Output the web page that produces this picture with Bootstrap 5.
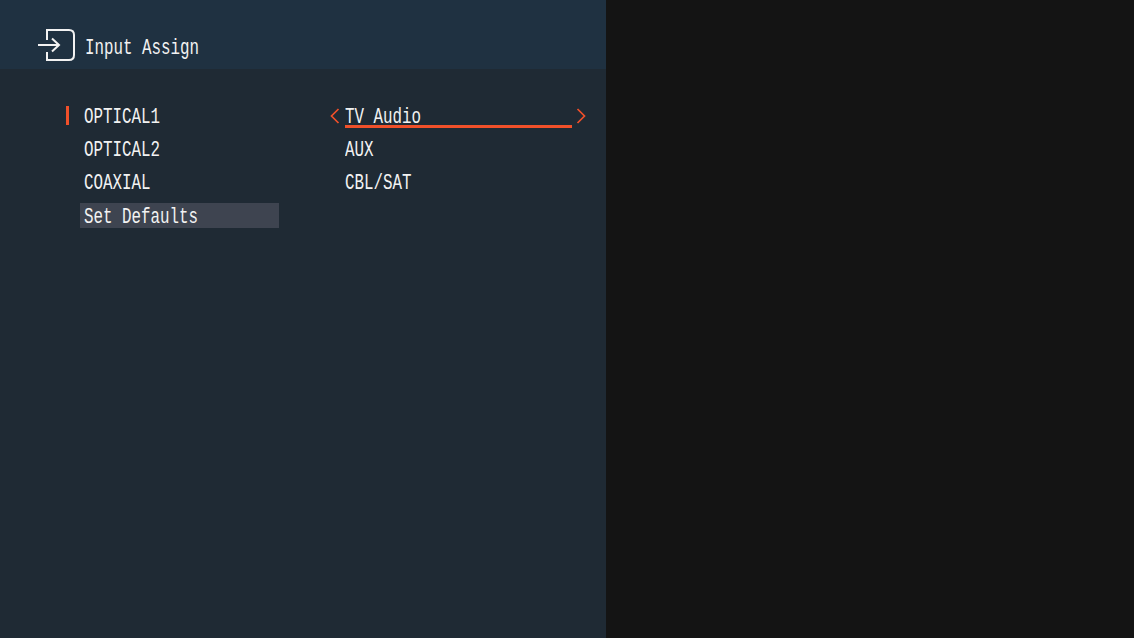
<!DOCTYPE html>
<html lang="en">
<head>
  <meta charset="UTF-8" />
  <meta name="viewport" content="width=device-width, initial-scale=1.0"/>
  <title>Input Assign</title>
  <link href="https://cdn.jsdelivr.net/npm/bootstrap@5.3.3/dist/css/bootstrap.min.css" rel="stylesheet"/>
  <style>
    body { background-color: #141414; color: #f2f2f2; font-family: "Liberation Mono", monospace; overflow: hidden; }
    .osd-screen { height: 638px; }
    .osd-panel { width: 606px; background-color: #1f2a34; }
    .osd-head { height: 69px; padding: 28px 0 0 38px; background-color: #1f3141; gap: 9px; }
    .osd-body { padding: 32px 0 0 80px; }
    .osd-left { width: 199px; margin-right: 66px; }
    .osd-right { width: 227px; }
    .osd-row { height: 33px; padding-left: 4px; position: relative; }
    .osd-row.osd-defaults { height: 25px; margin-top: 3px; background-color: #3e4450; }
    .osd-text { display: block; font-size: 22px; line-height: 34px; white-space: nowrap; transform: scaleX(.72); transform-origin: left center; }
    .osd-defaults .osd-text { line-height: 29px; }
    .osd-head .osd-text { margin-top: 4px; }
    .osd-marker { position: absolute; left: -14px; top: 5px; width: 3px; height: 19px; background-color: #f0502a; }
    .osd-value { height: 33px; position: relative; }
    .osd-active::after { content: ""; position: absolute; left: 0; right: 0; top: 24px; height: 3px; background-color: #f0502a; }
    .osd-arrow { position: absolute; top: 7px; }
    .osd-prev { left: -16px; }
    .osd-next { right: -15px; }
  </style>
</head>
<body>

<div class="osd-screen d-flex">
  <div class="osd-panel d-flex flex-column">
    <!-- Header -->
    <div class="osd-head d-flex align-items-start">
      <svg width="38" height="34" viewBox="0 0 38 34" fill="none" stroke="#f2f2f2" stroke-width="2">
        <path d="M9 12V2H31Q36 2 36 7V27Q36 32 31 32H9V24"/>
        <path d="M0 17H21M14 10.5L21 17L14 23.5"/>
      </svg>
      <span class="osd-text">Input Assign</span>
    </div>

    <!-- Menu -->
    <div class="osd-body d-flex">
      <div class="osd-left">
        <div class="osd-row"><span class="osd-marker"></span><span class="osd-text">OPTICAL1</span></div>
        <div class="osd-row"><span class="osd-text">OPTICAL2</span></div>
        <div class="osd-row"><span class="osd-text">COAXIAL</span></div>
        <div class="osd-row osd-defaults"><span class="osd-text">Set Defaults</span></div>
      </div>
      <div class="osd-right">
        <div class="osd-value osd-active">
          <svg class="osd-arrow osd-prev" width="11" height="16" viewBox="0 0 11 16" fill="none" stroke="#f0502a" stroke-width="1.7"><path d="M9.5 1L2.5 8L9.5 15"/></svg>
          <span class="osd-text">TV Audio</span>
          <svg class="osd-arrow osd-next" width="11" height="16" viewBox="0 0 11 16" fill="none" stroke="#f0502a" stroke-width="1.7"><path d="M1.5 1L8.5 8L1.5 15"/></svg>
        </div>
        <div class="osd-value"><span class="osd-text">AUX</span></div>
        <div class="osd-value"><span class="osd-text">CBL/SAT</span></div>
      </div>
    </div>
  </div>
</div>

<script src="https://cdn.jsdelivr.net/npm/bootstrap@5.3.3/dist/js/bootstrap.bundle.min.js"></script>
</body>
</html>
